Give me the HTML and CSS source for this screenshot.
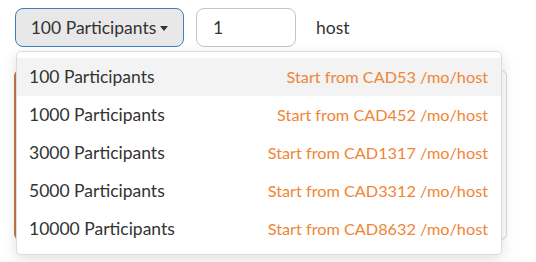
FILE: index.html
```html
<!DOCTYPE html>
<html>
<head>
<meta charset="utf-8">
<link rel="stylesheet" href="styles.css">
</head>
<body>
<div class="page">
  <div class="toolbar">
    <button class="select-btn">100 Participants<span class="caret"></span></button>
    <div class="qty-input">1</div>
    <span class="unit">host</span>
  </div>
  <div class="stage">
    <div class="card"></div>
    <ul class="menu">
      <li class="item active"><span class="name">100 Participants</span><span class="price">Start from CAD53 /mo/host</span></li>
      <li class="item"><span class="name">1000 Participants</span><span class="price">Start from CAD452 /mo/host</span></li>
      <li class="item"><span class="name">3000 Participants</span><span class="price">Start from CAD1317 /mo/host</span></li>
      <li class="item"><span class="name">5000 Participants</span><span class="price">Start from CAD3312 /mo/host</span></li>
      <li class="item"><span class="name">10000 Participants</span><span class="price">Start from CAD8632 /mo/host</span></li>
    </ul>
  </div>
</div>
</body>
</html>
```
FILE: styles.css
```css
* { box-sizing: border-box; }
html, body { margin: 0; padding: 0; background: #fff; }
body { font-family: Lato, "Open Sans", sans-serif; color: #333; font-size: 17.5px; }
.page { padding: 7px 0 0 15px; width: 536px; height: 262px; overflow: hidden; }
.toolbar { display: flex; align-items: center; height: 40px; }
.select-btn {
  font-family: inherit; font-size: 17.5px; color: #333;
  display: flex; align-items: center; justify-content: center;
  width: 169px; height: 39px; margin-top: 1px;
  background: #e8e8e8; border: 1px solid #3d7fc1; border-radius: 8px;
  padding: 0;
}
.caret {
  display: inline-block; margin-left: 4px; margin-top: 1px;
  border-left: 4.5px solid transparent; border-right: 4.5px solid transparent;
  border-top: 5px solid #333;
}
.qty-input {
  margin-left: 12px; width: 100px; height: 39px;
  border: 1px solid #c4c4c4; border-radius: 8px;
  display: flex; align-items: center; padding-left: 16px;
}
.unit { margin-left: 20px; }
.stage { position: relative; padding-top: 23px; }
.card {
  width: 493px; height: 170px; margin-left: -1px;
  border: 1px solid #d8d8d8; border-left: 2px solid #c07a48; border-radius: 6px;
}
.menu {
  position: absolute; top: 4px; left: 1px; width: 486px;
  margin: 0; padding: 6px 0 6px; list-style: none;
  background: #fff; border: 1px solid #dcdcdc; border-radius: 5px;
  box-shadow: 0 4px 14px rgba(0,0,0,0.13);
}
.item {
  display: flex; justify-content: space-between; align-items: center;
  height: 38px; padding: 0 13px 2px 12px;
}
.item.active { background: #f3f3f3; }
.price { color: #f08536; font-size: 16.25px; }
```
